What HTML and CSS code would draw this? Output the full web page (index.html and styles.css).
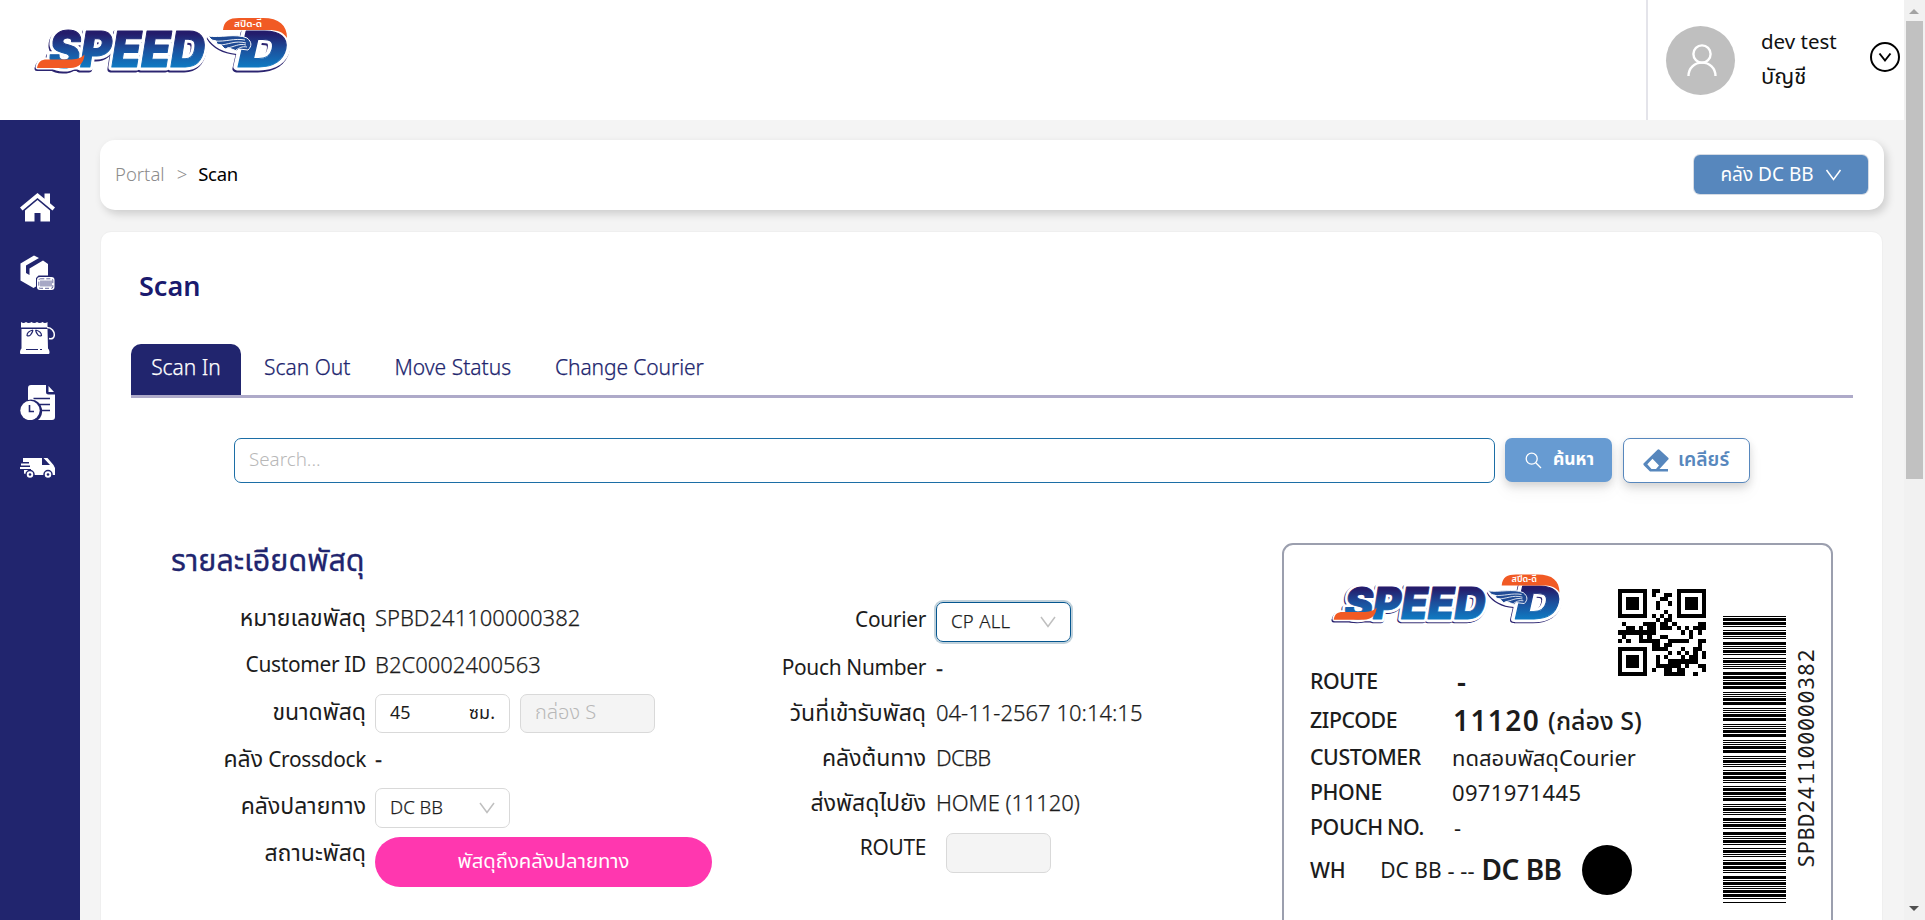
FILE: index.html
```html
<!DOCTYPE html>
<html lang="th">
<head>
<meta charset="utf-8">
<title>Scan</title>
<link rel="stylesheet" href="styles.css">
</head>
<body>
<svg class="defs" width="0" height="0">
  <defs>
    <linearGradient id="brand" gradientUnits="userSpaceOnUse" x1="0" y1="30" x2="0" y2="68">
      <stop offset="0.1" stop-color="#241c6b"/><stop offset="0.5" stop-color="#1c4f9c"/><stop offset="1" stop-color="#0e7cc4"/>
    </linearGradient>
    <symbol id="logo" viewBox="32 14 262 62">
      <g class="logo-text" stroke-linejoin="round">
        <g fill="#2b2470" stroke="#2b2470" stroke-width="7" transform="translate(-1 1.500)">
          <text x="49" y="67" font-size="49" textLength="156" lengthAdjust="spacingAndGlyphs">SPEED</text>
          <text x="238" y="67" font-size="50" textLength="49" lengthAdjust="spacingAndGlyphs">D</text>
          <path d="M38 67c1-5 3-7 8-7h38v7z" stroke-width="5"/>
          <path d="M209 37l34 1 6 10-12 4c-12-1-22-6-28-15z" stroke-width="3"/>
        </g>
        <g fill="#fff" stroke="#fff" stroke-width="7">
          <text x="49" y="67" font-size="49" textLength="156" lengthAdjust="spacingAndGlyphs">SPEED</text>
          <text x="238" y="67" font-size="50" textLength="49" lengthAdjust="spacingAndGlyphs">D</text>
          <path d="M38 67c1-5 3-7 8-7h38v7z" stroke-width="5"/>
          <path d="M209 37l34 1 6 10-12 4c-12-1-22-6-28-15z" stroke-width="4"/>
        </g>
        <g fill="url(#brand)" stroke="url(#brand)" stroke-width="1">
          <text x="49" y="67" font-size="49" textLength="156" lengthAdjust="spacingAndGlyphs">SPEED</text>
          <text x="238" y="67" font-size="50" textLength="49" lengthAdjust="spacingAndGlyphs">D</text>
        </g>
      </g>
      <path fill="#f15a24" d="M37 68c1-6 4-8.500 10-8.500h22c7 0 12-1 15.500-5-.5 8-5 13.500-14.500 13.500z"/>
      <path fill="#f15a24" d="M223 30c1-9 6-12 16-12h24c16 0 24 7 24 20-4-6-9-8-19-8z"/>
      <path fill="#1f4a94" stroke="#fff" stroke-width="1" d="M208 36c12 2 28-3 39 2 5 4 5 8 1 12l-9-1-2 2-8-3-4 1-4-4-4-1-1-3-4-1z"/>
      <path fill="none" stroke="#fff" stroke-width=".9" d="M214 41c12 1 20-3 31-1M219 45c9 0 16-5 27-2M227 48c7-1 12-5 19-3M236 50c3-2 6-4 11-3"/>
      <text class="logo-sub" x="234" y="26.500" font-size="9" textLength="28" lengthAdjust="spacingAndGlyphs" fill="#fff">สปีด-ดี</text>
    </symbol>
    <symbol id="chev" viewBox="0 0 16 14"><path d="M1 2l7 9.500L15 2" fill="none" stroke="currentColor" stroke-width="1.500"/></symbol>
  </defs>
</svg>

<div class="screen">
  <div class="app">
    <header class="topbar">
      <svg class="logo" width="262" height="62"><use href="#logo"/></svg>
      <div class="account">
        <span class="avatar">
          <svg width="30" height="32" viewBox="0 0 30 32" fill="none" stroke="#fff" stroke-width="2.400"><circle cx="15" cy="10" r="8.600"/><path d="M1.500 32c0-8 6-13.400 13.500-13.400S28.500 24 28.500 32"/></svg>
        </span>
        <div class="who"><span>dev test</span><span class="th">บัญชี</span></div>
        <svg class="more" width="30" height="30" viewBox="0 0 30 30" fill="none" stroke="#000" stroke-width="2"><circle cx="15" cy="15" r="14"/><path d="M9.500 11.500L15 18.500l5.500-7"/></svg>
      </div>
    </header>

    <div class="body">
      <nav class="side">
        <svg width="35" height="30" viewBox="0 0 35 30"><path fill="#fff" d="M17.500 0L0 14.500 2.500 17.500 17.500 5 32.500 17.500 35 14.500 30 10.300V0.500h-5.500v5.300z"/><path fill="#fff" d="M17.500 7L5 17.400V28.500h9.500V20h6v8.500H30V17.400z"/></svg>
        <svg width="35" height="36" viewBox="0 0 35 36"><path fill="#fff" d="M14 0.500l5 2.500L6 10.500V18l3.500 2V13.500L23 5.500l5 3.500v11.500H18.500L16 23v8.500L13.500 33 0.500 25.500V8.500z"/><rect x="17" y="22" width="17.500" height="13" rx="3" fill="#fff"/><rect x="18.800" y="23.800" width="14" height="9.500" rx="1.500" fill="none" stroke="#21256e" stroke-width=".7" stroke-dasharray="4 2"/><path d="M21 25.500v6M23 25.500v6M25 25.500v6M27 25.500v6M29 25.500v6M31 25.500v6" stroke="#21256e" stroke-width=".8"/></svg>
        <svg width="35" height="34" viewBox="0 0 35 34"><path fill="#fff" d="M1 1c2 1.500 3.500 1 5 0 2 1.500 4 1 5.500 0 2 1.500 4 1 5.500 0 2 1.500 4 1 5.500 0 2 1.500 3.500 1 5 0v5.500H1zM1.500 8h26l.5 19.500c1 1 1.500 2 1.500 4 0 1-.5 1.500-1.500 1.500H1.500C.5 33 0 32.500 0 31.500c0-2 .5-3 1.500-4z"/><path fill="none" stroke="#fff" stroke-width="1.500" d="M27 6.500c5 0 7.300 4 7.300 7.500 0 3-2.300 4.500-5.300 3.500"/><path fill="none" stroke="#21256e" stroke-width="1.200" d="M13 9c-4 1-6 3-6 5.500 2.500 1.500 5-1.500 6-5.500M15.500 9c4 1 6 3 6 5.500-2.500 1.500-5-1.500-6-5.500M6 28.500h12M20 28.500h2"/></svg>
        <svg width="35" height="35" viewBox="0 0 35 35"><path fill="#fff" d="M11 0h15v7q0 2.500 2.500 2.500H35V32q0 3-3 3H18q5-4 4-11-2-9-11-9.500-1.500 0-3 .5V3q0-3 3-3z"/><path fill="#fff" d="M28.500 1L34 7h-5.500z"/><circle cx="10" cy="25.500" r="9.700" fill="#fff"/><path fill="none" stroke="#21256e" stroke-width="1.600" d="M13.500 13.500H30M19 19.500h11M21.500 25.500H30M9.500 20v6.500h4.500"/></svg>
        <svg width="35" height="22" viewBox="0 0 35 22"><path fill="#fff" d="M3 1h19v6h0v11H8L4 16.500V13h7v-1H0v-2h10V8.500H1V6.500h8V5H3z"/><path fill="#fff" d="M23.500 1h4l6 7 1.500 3v7H22V8h8z"/><circle cx="10" cy="17.500" r="4" fill="#fff" stroke="#21256e" stroke-width="1.500"/><circle cx="28" cy="17.500" r="4" fill="#fff" stroke="#21256e" stroke-width="1.500"/><circle cx="10" cy="17.500" r="1.300" fill="#21256e"/><circle cx="28" cy="17.500" r="1.300" fill="#21256e"/></svg>
      </nav>

      <main class="main">
        <section class="crumbs">
          <div class="trail"><span class="muted">Portal</span><span class="muted gt">&gt;</span><span class="here">Scan</span></div>
          <button class="wh-btn"><span>คลัง DC BB</span><svg width="17" height="14"><use href="#chev"/></svg></button>
        </section>

        <section class="panel">
          <h1>Scan</h1>
          <div class="tabs">
            <span class="tab on">Scan In</span><span class="tab">Scan Out</span><span class="tab">Move Status</span><span class="tab">Change Courier</span>
          </div>

          <div class="search">
            <div class="field">Search...</div>
            <button class="find"><svg width="17" height="17" viewBox="0 0 17 17" fill="none" stroke="#fff" stroke-width="1.300"><circle cx="6.700" cy="6.700" r="5.500"/><path d="M10.800 10.800L16 16"/></svg><span>ค้นหา</span></button>
            <button class="clear"><svg width="26" height="23" viewBox="0 0 26 23"><path fill="#5787bd" fill-rule="evenodd" d="M14.500.8q1-.9 2 0l8.700 8q.9.900 0 1.800L16.500 20H25v2.500H7L1 16.500q-1.300-1.200 0-2.400zM9.500 9.800L4.300 15.300 8.500 20H13l3-3.500z"/></svg><span>เคลียร์</span></button>
          </div>

          <div class="content">
            <div class="details">
              <h2>รายละเอียดพัสดุ</h2>
              <div class="cols">
                <div class="grid left">
                  <label class="th">หมายเลขพัสดุ</label><span class="v">SPBD241100000382</span>
                  <label>Customer ID</label><span class="v">B2C0002400563</span>
                  <label class="th">ขนาดพัสดุ</label><div class="pair"><div class="box"><span>45</span><span>ซม.</span></div><div class="box off"><span>กล่อง S</span></div></div>
                  <label><span class="th">คลัง</span> Crossdock</label><span class="v dash-v">-</span>
                  <label class="th">คลังปลายทาง</label><div class="box sel"><span>DC BB</span><svg width="16" height="14"><use href="#chev"/></svg></div>
                  <label class="th">สถานะพัสดุ</label><div class="status"><span>พัสดุถึงคลังปลายทาง</span></div>
                </div>
                <div class="grid mid">
                  <label>Courier</label><div class="box sel focus"><span>CP ALL</span><svg width="16" height="14"><use href="#chev"/></svg></div>
                  <label>Pouch Number</label><span class="v dash-v">-</span>
                  <label class="th">วันที่เข้ารับพัสดุ</label><span class="v">04-11-2567 10:14:15</span>
                  <label class="th">คลังต้นทาง</label><span class="v tight">DCBB</span>
                  <label class="th">ส่งพัสดุไปยัง</label><span class="v home">HOME (11120)</span>
                  <label>ROUTE</label><div class="box off route"></div>
                </div>
              </div>
            </div>

            <div class="ticket">
              <div class="t-main">
                <div class="t-head">
                  <svg class="t-logo" width="237" height="56"><use href="#logo"/></svg>
                  <svg class="qr" id="qr" width="88" height="87" viewBox="0 0 21 21" preserveAspectRatio="none" shape-rendering="crispEdges"></svg>
                </div>
                <div class="t-rows">
                  <b>ROUTE</b><span class="big dash">-</span>
                  <b>ZIPCODE</b><span class="zip"><span class="big">11120</span><span class="sz">(กล่อง S)</span></span>
                  <b>CUSTOMER</b><span class="tv">ทดสอบพัสดุCourier</span>
                  <b>PHONE</b><span class="tv ph">0971971445</span>
                  <b>POUCH NO.</b><span class="tv hy">-</span>
                </div>
                <div class="t-wh"><b>WH</b><span class="tv dc">DC BB</span><span class="tv dd">- --</span><span class="big">DC BB</span><i class="dot"></i></div>
              </div>
              <svg class="bars" id="bars" width="63" height="288" shape-rendering="crispEdges"></svg>
              <div class="code"><span>SPBD241100000382</span></div>
            </div>
          </div>
        </section>
      </main>
    </div>
  </div>
  <div class="scroll"><i class="up"></i><i class="thumb"></i><i class="down"></i></div>
</div>
<script src="codes.js"></script>
</body>
</html>
```
FILE: styles.css
```css
*{box-sizing:border-box}
body{margin:0;height:920px;overflow:hidden;background:#f4f4f4;color:#1c1c1c;font-family:"Noto Sans","Noto Sans Thai","Noto Sans Thai UI",sans-serif;font-size:22px;line-height:32px}
button{font:inherit;border:0;padding:0;margin:0}
svg{display:block;flex:none}
.defs{position:absolute}
.logo-text{font-family:Inter,"Open Sans",sans-serif;font-weight:900;font-style:italic}
.logo-sub{font-family:"Noto Sans Thai",sans-serif;font-weight:600}
.screen{display:flex;width:1925px;height:920px;overflow:hidden}
.app{width:1904px;flex:none}
.topbar{height:120px;background:#fff;display:flex;justify-content:space-between}
.logo{margin:14px 0 0 32px}
.account{width:258px;border-left:2px solid #e4e4ea;padding-left:18px;display:flex}
.avatar{width:69px;height:69px;margin-top:26px;border-radius:50%;background:#bfbfbf;display:flex;justify-content:center;padding-top:18px}
.avatar svg{margin-left:2px}
.who{margin:24px 0 0 26px;width:109px;display:flex;flex-direction:column;font-size:20.5px;line-height:34px;color:#111}
.who .th{font-size:22px}
.more{margin-top:42px}
.body{display:flex;height:800px}
.side{width:80px;background:#21256e;padding:73px 0 0 20px;display:flex;flex-direction:column}
.side svg:nth-child(1){margin-bottom:32px}
.side svg:nth-child(2){margin-bottom:30px}
.side svg:nth-child(3){margin-bottom:30px}
.side svg:nth-child(4){margin-bottom:37px}
.main{padding:20px;flex:1}
.crumbs{height:70px;width:1784px;background:#fff;border-radius:15px;box-shadow:3px 4px 8px rgba(0,0,0,.16);display:flex;justify-content:space-between;align-items:center;padding:0 16px 0 15px}
.trail{display:flex;font-size:18.500px;font-weight:300;color:#000;margin-top:-2px}
.here{font-weight:400;letter-spacing:-.3px}
.muted{color:#8c8c8c}
.trail .gt{margin:0 11px 0 12px}
.wh-btn{width:174px;height:39px;margin-top:-1px;background:#5787bd;color:#fff;border-radius:6px;display:flex;align-items:center;justify-content:center;gap:11px;font-size:19px;box-shadow:0 0 0 1px #d5dbe4}
.wh-btn span{margin-top:-2px}
.panel{width:1783px;height:720px;margin:21px 0 0 0;background:#fff;border:1px solid #efefef;border-radius:11px;padding:0 29px 0 30px}
h1{margin:32px 0 0 8px;font-size:27px;line-height:44px;font-weight:600;color:#1a1a6e}
.tabs{margin-top:36px;height:54px;border-bottom:3px solid #aeaac9;display:flex;font-size:21px;font-weight:350;color:#21256e;line-height:46px;-webkit-text-stroke:.25px currentColor}
.tab{margin-left:23px;padding:0}
.tab.on{width:110px;height:51px;margin:0;background:#21256e;color:#fff;border-radius:10px 10px 0 0;text-align:center}
.tab:nth-child(n+3){margin-left:44px}
.tab:nth-child(4){letter-spacing:-.1px}
.search{margin:40px 0 0 103px;display:flex}
.field{width:1261px;height:45px;border:1px solid #1c6ea6;border-radius:7px;padding-left:14px;line-height:40px;font-size:18.800px;font-weight:300;color:#b8b8b8}
.find,.clear{height:44px;border-radius:7px;display:flex;align-items:center;box-shadow:0 4px 8px rgba(0,0,0,.15),0 10px 18px rgba(0,0,0,.04)}
.find{width:107px;margin-left:10px;background:#679bd2;color:#fff;padding-left:20px;gap:11px;font-size:17.500px;font-weight:700}
.find span,.clear span{margin-top:-4px}
.clear{width:127px;height:45px;margin-left:11px;background:#fff;border:1px solid #5787bd;color:#5787bd;padding-left:19px;gap:9px;font-weight:600;font-size:19.300px}
.content{display:flex;margin-top:60px}
.details{width:1151px;flex:none;padding-left:40px}
h2{margin:-4px 0 4px;font-size:30.500px;line-height:40px;font-weight:400;color:#21256e;-webkit-text-stroke:.3px currentColor}
.cols{display:flex;padding-top:12px}
.grid{display:grid;column-gap:9px;align-items:center;white-space:nowrap}
.grid label{text-align:right;font-size:20.900px;letter-spacing:-.32px;margin-top:-3px}
.grid .th{font-size:23px;letter-spacing:0}
.left{grid-template-columns:195px 337px;grid-template-rows:repeat(6,47px)}
.mid{grid-template-columns:214px 200px;grid-template-rows:49px 46px repeat(4,45px);margin:1px 0 0 0;column-gap:10px}
.v{font-weight:350;margin-top:-3px;-webkit-text-stroke:.25px currentColor}
.dash-v{font-weight:400}
.tight{letter-spacing:-.7px}
.home{letter-spacing:-.1px}
.box{width:135px;height:39px;border:1px solid #d9d9d9;border-radius:7px;display:flex;align-items:center;justify-content:space-between;padding:0 14px;font-size:18px;margin-top:1px}
.box span{margin-top:-2px}
.off{background:#f4f4f4;color:#b8b8b8;font-weight:300;font-size:20px}
.pair{display:flex;gap:10px}
.sel{height:40px;color:#1c1c1c;font-weight:350;font-size:18.500px;margin-top:2px;-webkit-text-stroke:.25px currentColor}
.sel svg{color:#bfbfbf}
.focus{border-color:#05568f;box-shadow:0 0 0 2px rgba(5,70,110,.25);letter-spacing:.3px}
.status{align-self:start;margin-top:7px;height:50px;border-radius:25px;background:#ff37af;color:#fff;font-size:20.300px;display:flex;align-items:center;justify-content:center}
.status span{margin-top:-4px}
.route{width:105px;height:40px;margin:8px 0 0 10px}
.ticket{width:551px;height:420px;border:2px solid #9b9fae;border-radius:11px;display:flex;padding-left:26px}
.t-main{width:413px;flex:none}
.t-head{height:116px;display:flex;padding-left:19px}
.t-logo{margin-top:26px}
.qr{margin:44px 0 0 52px}
.t-rows{display:grid;grid-template-columns:142px 1fr;grid-template-rows:39px 40px 34px 35px 35px;align-items:center;white-space:nowrap}
.t-main b{font-weight:500;font-size:21.300px;letter-spacing:-.4px;word-spacing:-1px}
.big{font-size:28px;font-weight:600}
.zip{display:flex;gap:8px;padding-left:1px}
.zip .big{letter-spacing:1.400px}
.sz{font-weight:500;font-size:25px}
.ph{letter-spacing:.35px}
.dash{padding-left:5px}
.hy{padding-left:2px}
.t-wh{height:51px;display:flex;align-items:center}
.t-wh .tv{margin-left:35px}
.t-wh .dc{font-size:21px}
.t-wh .dd{margin-left:6px}
.t-wh .big{margin:-2px 0 0 7px;letter-spacing:-.5px}
.dot{width:50px;height:50px;border-radius:50%;background:#000;margin-left:20px}
.bars{margin-top:70px}
.code{width:38px;height:220px;margin-top:103px;writing-mode:vertical-rl;transform:rotate(180deg);font-family:"Noto Sans Mono",monospace;font-size:22px;letter-spacing:.5px;line-height:38px;white-space:nowrap}
.scroll{width:21px;background:#f1f1f1;padding:9px 0 0 2px;display:flex;flex-direction:column}
.up,.down{width:0;border:5px solid transparent;margin-left:3px}
.up{border-top:0;border-bottom-color:#a3a3a3}
.thumb{width:17px;height:458px;margin-top:7px;background:#c1c1c1}
.down{border-bottom:0;border-top-color:#505050;margin-top:427px}
```
FILE: codes.js
```js
// Code 39 bars, one unit per module, drawn from the bottom up
var C39 = {'0':'000110100','1':'100100001','2':'001100001','3':'101100000','4':'000110001','8':'100100100',
  B:'001001001',D:'000011001',P:'001010010',S:'001000110','*':'010010100'};
var y = 288, d = '';
'*SPBD241100000382*'.split('').forEach(function (ch) {
  C39[ch].split('').forEach(function (w, i) {
    var h = w === '1' ? 3 : 1;
    y -= h;
    if (i % 2 === 0) d += 'M0 ' + y + 'h63v' + h + 'h-63z';
  });
  y -= 1;
});
document.getElementById('bars').innerHTML = '<path d="' + d + '"/>';

// QR code, version 1 (21x21), level Q, alphanumeric mode, mask 5
function qr(text) {
  var ALNUM = '0123456789ABCDEFGHIJKLMNOPQRSTUVWXYZ $%*+-./:';
  var EC = 13, DATA = 13, LEVEL = 3, MASK = 5, bits = [], i, j;
  function put(v, n) { for (var k = n - 1; k >= 0; k--) bits.push(v >> k & 1); }
  put(2, 4); put(text.length, 9);
  for (i = 0; i < text.length; i += 2) put(ALNUM.indexOf(text[i]) * 45 + ALNUM.indexOf(text[i + 1]), 11);
  for (i = 0; i < 4 && bits.length < DATA * 8; i++) bits.push(0);
  while (bits.length % 8) bits.push(0);
  var data = [];
  for (i = 0; i < bits.length; i += 8) data.push(parseInt(bits.slice(i, i + 8).join(''), 2));
  for (var pad = 0xec; data.length < DATA; pad ^= 0xfd) data.push(pad);

  function mul(a, b) { var z = 0; for (var k = 7; k >= 0; k--) { z = (z << 1) ^ ((z >> 7) * 0x11d); z ^= ((b >> k) & 1) * a; } return z; }
  var g = Array(EC).fill(0), root = 1;
  g[EC - 1] = 1;
  for (i = 0; i < EC; i++) {
    for (j = 0; j < EC; j++) { g[j] = mul(g[j], root); if (j + 1 < EC) g[j] ^= g[j + 1]; }
    root = mul(root, 2);
  }
  var r = Array(EC).fill(0);
  data.forEach(function (b) { var f = b ^ r.shift(); r.push(0); g.forEach(function (c, k) { r[k] ^= mul(c, f); }); });
  var all = data.concat(r), M = [], F = [];
  for (i = 0; i < 21; i++) { M.push(Array(21).fill(0)); F.push(Array(21).fill(0)); }
  function set(x, y, v) { M[y][x] = v ? 1 : 0; F[y][x] = 1; }
  for (i = 0; i < 21; i++) { set(6, i, i % 2 === 0); set(i, 6, i % 2 === 0); }
  [[3, 3], [17, 3], [3, 17]].forEach(function (c) {
    for (var a = -4; a <= 4; a++) for (var b = -4; b <= 4; b++) {
      var m = Math.max(Math.abs(a), Math.abs(b)), X = c[0] + b, Y = c[1] + a;
      if (X >= 0 && X < 21 && Y >= 0 && Y < 21) set(X, Y, m !== 2 && m !== 4);
    }
  });
  var fmt = LEVEL << 3 | MASK, rem = fmt;
  for (i = 0; i < 10; i++) rem = (rem << 1) ^ ((rem >> 9) * 0x537);
  var fb = (fmt << 10 | rem) ^ 0x5412;
  function B(k) { return fb >> k & 1; }
  for (i = 0; i < 6; i++) set(8, i, B(i));
  set(8, 7, B(6)); set(8, 8, B(7)); set(7, 8, B(8));
  for (i = 9; i < 15; i++) set(14 - i, 8, B(i));
  for (i = 0; i < 8; i++) set(20 - i, 8, B(i));
  for (i = 8; i < 15; i++) set(8, 6 + i, B(i));
  set(8, 13, 1);
  var n = 0;
  for (var R = 20; R >= 1; R -= 2) {
    if (R === 6) R = 5;
    for (var v = 0; v < 21; v++) for (j = 0; j < 2; j++) {
      var x = R - j, yy = ((R + 1) & 2) === 0 ? 20 - v : v;
      if (!F[yy][x] && n < 208) {
        M[yy][x] = all[n >> 3] >> (7 - (n & 7)) & 1;
        if (x * yy % 2 + x * yy % 3 === 0) M[yy][x] ^= 1;
        n++;
      }
    }
  }
  return M;
}
var q = '';
qr('SPBD241100000382').forEach(function (row, i) {
  row.forEach(function (on, j) { if (on) q += 'M' + j + ' ' + i + 'h1v1h-1z'; });
});
document.getElementById('qr').innerHTML = '<path d="' + q + '"/>';
```
